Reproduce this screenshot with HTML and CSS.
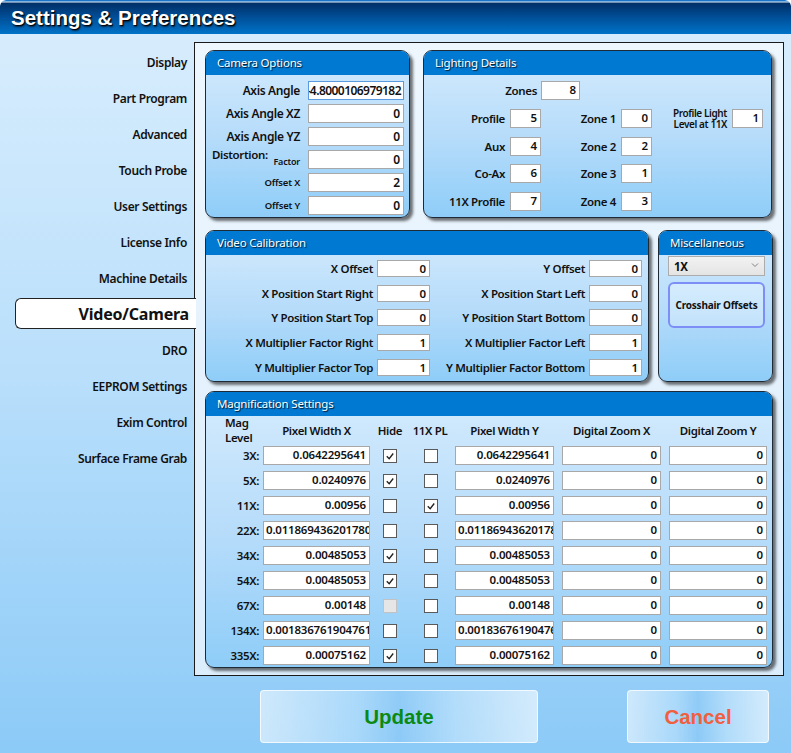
FILE: index.html
```html
<!DOCTYPE html>
<html>
<head>
<meta charset="utf-8">
<title>Settings &amp; Preferences</title>
<link rel="stylesheet" href="styles.css">
</head>
<body>
<div class="window">
  <div class="titlebar"><span class="title">Settings &amp; Preferences</span></div>
  <div class="main">
    <nav class="sidebar">
      <div class="nav-item">Display</div>
      <div class="nav-item">Part Program</div>
      <div class="nav-item">Advanced</div>
      <div class="nav-item">Touch Probe</div>
      <div class="nav-item">User Settings</div>
      <div class="nav-item">License Info</div>
      <div class="nav-item">Machine Details</div>
      <div class="nav-item active"><span class="tab">Video/Camera</span></div>
      <div class="nav-item">DRO</div>
      <div class="nav-item">EEPROM Settings</div>
      <div class="nav-item">Exim Control</div>
      <div class="nav-item">Surface Frame Grab</div>
    </nav>
    <div class="panel">
      <div class="row row1">
        <section class="group camera">
          <div class="ghead">Camera Options</div>
          <div class="camera-body">
            <label class="lbl">Axis Angle</label><div class="field focus overflow-left"><span>-4.8000106979182</span></div>
            <label class="lbl">Axis Angle XZ</label><div class="field">0</div>
            <label class="lbl">Axis Angle YZ</label><div class="field">0</div>
            <div class="lbl split"><span class="dist">Distortion:</span><span class="small">Factor</span></div><div class="field">0</div>
            <label class="lbl small">Offset X</label><div class="field">2</div>
            <label class="lbl small">Offset Y</label><div class="field">0</div>
          </div>
        </section>
        <section class="group lighting">
          <div class="ghead">Lighting Details</div>
          <div class="zones-row"><label class="lbl zones-lbl">Zones</label><div class="field zones-field">8</div></div>
          <div class="light-grid">
            <label class="lbl">Profile</label><div class="field">5</div>
            <label class="lbl">Zone 1</label><div class="field">0</div>
            <label class="lbl two-line">Profile Light<br>Level at 11X</label><div class="field">1</div>
            <label class="lbl">Aux</label><div class="field">4</div>
            <label class="lbl">Zone 2</label><div class="field">2</div>
            <span></span><span></span>
            <label class="lbl">Co-Ax</label><div class="field">6</div>
            <label class="lbl">Zone 3</label><div class="field">1</div>
            <span></span><span></span>
            <label class="lbl">11X Profile</label><div class="field">7</div>
            <label class="lbl">Zone 4</label><div class="field">3</div>
            <span></span><span></span>
          </div>
        </section>
      </div>
      <div class="row row2">
        <section class="group video">
          <div class="ghead">Video Calibration</div>
          <div class="video-grid">
            <label class="lbl">X Offset</label><div class="field">0</div>
            <label class="lbl">Y Offset</label><div class="field">0</div>
            <label class="lbl">X Position Start Right</label><div class="field">0</div>
            <label class="lbl">X Position Start Left</label><div class="field">0</div>
            <label class="lbl">Y Position Start Top</label><div class="field">0</div>
            <label class="lbl">Y Position Start Bottom</label><div class="field">0</div>
            <label class="lbl">X Multiplier Factor Right</label><div class="field">1</div>
            <label class="lbl">X Multiplier Factor Left</label><div class="field">1</div>
            <label class="lbl">Y Multiplier Factor Top</label><div class="field">1</div>
            <label class="lbl">Y Multiplier Factor Bottom</label><div class="field">1</div>
          </div>
        </section>
        <section class="group misc">
          <div class="ghead">Miscellaneous</div>
          <div class="select"><span>1X</span><svg class="chev" width="8" height="6" viewBox="0 0 8 6"><path d="M1 1.5 L4 4.5 L7 1.5" fill="none" stroke="#808080" stroke-width="1"/></svg></div>
          <div class="cross-btn">Crosshair Offsets</div>
        </section>
      </div>
      <div class="row row3">
        <section class="group mag">
          <div class="ghead">Magnification Settings</div>
          <div class="mag-grid">
            <div class="mh mag-level">Mag<br>Level</div>
            <div class="mh">Pixel Width X</div>
            <div class="mh">Hide</div>
            <div class="mh pl">11X PL</div>
            <div class="mh">Pixel Width Y</div>
            <div class="mh dz">Digital Zoom X</div>
            <div class="mh dz">Digital Zoom Y</div>

            <label class="rl">3X:</label><div class="field">0.0642295641</div>
            <div class="cbc"><span class="cb on"><svg viewBox="0 0 13 13"><path d="M3 6.8 L5.6 9.4 L10 3.8"/></svg></span></div>
            <div class="cbc pl"><span class="cb"></span></div>
            <div class="field">0.0642295641</div><div class="field dzx">0</div><div class="field dzy">0</div>

            <label class="rl">5X:</label><div class="field">0.0240976</div>
            <div class="cbc"><span class="cb on"><svg viewBox="0 0 13 13"><path d="M3 6.8 L5.6 9.4 L10 3.8"/></svg></span></div>
            <div class="cbc pl"><span class="cb"></span></div>
            <div class="field">0.0240976</div><div class="field dzx">0</div><div class="field dzy">0</div>

            <label class="rl">11X:</label><div class="field">0.00956</div>
            <div class="cbc"><span class="cb"></span></div>
            <div class="cbc pl"><span class="cb on"><svg viewBox="0 0 13 13"><path d="M3 6.8 L5.6 9.4 L10 3.8"/></svg></span></div>
            <div class="field">0.00956</div><div class="field dzx">0</div><div class="field dzy">0</div>

            <label class="rl">22X:</label><div class="field clip-right">0.0118694362017804</div>
            <div class="cbc"><span class="cb"></span></div>
            <div class="cbc pl"><span class="cb"></span></div>
            <div class="field clip-right">0.0118694362017804</div><div class="field dzx">0</div><div class="field dzy">0</div>

            <label class="rl">34X:</label><div class="field">0.00485053</div>
            <div class="cbc"><span class="cb on"><svg viewBox="0 0 13 13"><path d="M3 6.8 L5.6 9.4 L10 3.8"/></svg></span></div>
            <div class="cbc pl"><span class="cb"></span></div>
            <div class="field">0.00485053</div><div class="field dzx">0</div><div class="field dzy">0</div>

            <label class="rl">54X:</label><div class="field">0.00485053</div>
            <div class="cbc"><span class="cb on"><svg viewBox="0 0 13 13"><path d="M3 6.8 L5.6 9.4 L10 3.8"/></svg></span></div>
            <div class="cbc pl"><span class="cb"></span></div>
            <div class="field">0.00485053</div><div class="field dzx">0</div><div class="field dzy">0</div>

            <label class="rl">67X:</label><div class="field">0.00148</div>
            <div class="cbc"><span class="cb disabled"></span></div>
            <div class="cbc pl"><span class="cb"></span></div>
            <div class="field">0.00148</div><div class="field dzx">0</div><div class="field dzy">0</div>

            <label class="rl">134X:</label><div class="field clip-right">0.0018367619047619</div>
            <div class="cbc"><span class="cb"></span></div>
            <div class="cbc pl"><span class="cb"></span></div>
            <div class="field clip-right">0.00183676190476</div><div class="field dzx">0</div><div class="field dzy">0</div>

            <label class="rl">335X:</label><div class="field">0.00075162</div>
            <div class="cbc"><span class="cb on"><svg viewBox="0 0 13 13"><path d="M3 6.8 L5.6 9.4 L10 3.8"/></svg></span></div>
            <div class="cbc pl"><span class="cb"></span></div>
            <div class="field">0.00075162</div><div class="field dzx">0</div><div class="field dzy">0</div>
          </div>
        </section>
      </div>
    </div>
  </div>
  <div class="actions">
    <button class="btn update">Update</button>
    <button class="btn cancel">Cancel</button>
  </div>
</div>
</body>
</html>
```

FILE: styles.css
```css
* { box-sizing: border-box; }
html, body { margin: 0; padding: 0; }
body {
  width: 791px;
  height: 753px;
  overflow: hidden;
  font-family: "Noto Sans", "Open Sans", sans-serif;
  color: #111;
  letter-spacing: -0.35px;
}
.window {
  width: 791px;
  height: 753px;
  background: linear-gradient(to bottom, #daeefd 0%, #b9dffb 50%, #8ccaf7 100%);
  border-radius: 6px 6px 0 0;
  overflow: hidden;
}
.titlebar {
  height: 34px;
  background: linear-gradient(to bottom, #1b74c8 0px, #1b74c8 1px, #e8f3fc 2px, #002f66 3px, #004c94 16px, #0073c8 34px);
  border-radius: 6px 6px 0 0;
  display: flex;
  align-items: center;
  padding-left: 11px;
  padding-top: 2px;
}
.title {
  font-family: "Liberation Sans", Arial, sans-serif;
  font-weight: bold;
  font-size: 20.5px;
  letter-spacing: 0;
  color: #fff;
  text-shadow: 1px 1px 1px #000, 1px 2px 2px rgba(0,0,0,.6);
}
.main {
  display: flex;
  height: 642px;
}
.sidebar {
  width: 194px;
  flex: none;
  padding-top: 10px;
  display: flex;
  flex-direction: column;
}
.nav-item {
  height: 36px;
  display: flex;
  align-items: center;
  justify-content: flex-end;
  padding-right: 7px;
  font-size: 12px;
  font-weight: 600;
  color: #111;
}
.nav-item.active {
  padding-right: 0;
  position: relative;
  z-index: 2;
}
.tab {
  margin: 2px -2px 3px 15px;
  flex: 1;
  height: 31px;
  background: #fff;
  border: 1px solid #222;
  border-right: none;
  border-radius: 6px 0 0 6px;
  display: flex;
  align-items: center;
  justify-content: flex-end;
  padding-right: 7px;
  font-size: 16px;
  font-weight: 700;
  letter-spacing: -0.2px;
}
.panel {
  margin-top: 8px;
  width: 590px;
  height: 634px;
  border: 1px solid #1a1a1a;
  background: linear-gradient(to bottom, #eef7fe, #dcedfc);
  padding: 7px 0 0 10px;
}
.row { display: flex; }
.row1 { gap: 13px; height: 168px; }
.row2 { gap: 9px; height: 152px; margin-top: 12px; }
.row3 { margin-top: 9px; height: 277px; }

.group {
  border: 1px solid #1e2a36;
  border-radius: 9px;
  overflow: hidden;
  background: linear-gradient(to bottom, #d4ebfd 0%, #b4dbfa 55%, #8ecdf8 100%);
  box-shadow: 3px 3px 3px rgba(0,0,0,.55);
}
.ghead {
  height: 24px;
  line-height: 24px;
  background: #0079d3;
  color: #fff;
  font-size: 11.5px;
  letter-spacing: -0.2px;
  padding-left: 11px;
  text-shadow: 1px 1px 1px rgba(0,0,0,.8);
}
.camera { width: 205px; height: 168px; }
.lighting { width: 349px; height: 168px; }
.video { width: 444px; height: 152px; }
.misc { width: 115px; height: 152px; }
.mag { width: 568px; height: 277px; }

.lbl {
  font-size: 11.5px;
  font-weight: 600;
  text-align: right;
  display: flex;
  align-items: center;
  justify-content: flex-end;
  white-space: nowrap;
}
.lbl.small, .lbl .small { font-size: 9px; letter-spacing: -0.2px; }
.field {
  background: #fff;
  border: 1px solid #a8a8a8;
  font-size: 11.5px;
  font-weight: 600;
  letter-spacing: -0.2px;
  text-align: right;
  padding: 0 3px;
  line-height: 16px;
  white-space: nowrap;
  overflow: hidden;
  color: #111;
}
.field.focus { border-color: #5a9be0; }
.field.overflow-left {
  display: flex;
  justify-content: flex-end;
  padding-right: 2px;
  letter-spacing: -0.55px;
}
.field.overflow-left span { flex: none; }
.field.clip-right { text-align: left; padding-left: 2px; }

.camera-body {
  display: grid;
  grid-template-columns: 1fr 96px;
  grid-auto-rows: 19px;
  column-gap: 8px;
  row-gap: 4px;
  padding: 6px 5px 0 6px;
}
.camera .field { line-height: 17px; font-size: 12px; }
.camera .lbl { font-size: 12px; }
.camera .lbl.small { font-size: 9.5px; }
.lbl.split { justify-content: space-between; }
.lbl.split .dist { align-self: flex-start; font-size: 11.5px; margin-top: -3px; }
.lbl.split .small { margin-top: 3px; }

.zones-row {
  display: flex;
  margin-top: 6px;
  height: 19px;
}
.zones-lbl { width: 113px; margin-right: 4px; }
.zones-field { width: 39px; }
.light-grid {
  display: grid;
  grid-template-columns: 81px 31px 70px 31px 70px 31px;
  grid-auto-rows: 19px;
  column-gap: 5px;
  row-gap: 8.5px;
  margin-top: 9px;
}
.light-grid .field, .zones-field { line-height: 15px; }
.lbl.two-line { font-size: 10px; line-height: 11px; text-align: right; letter-spacing: -0.4px; }

.video-grid {
  display: grid;
  grid-template-columns: 167px 53px 151px 53px;
  grid-auto-rows: 17px;
  column-gap: 4px;
  row-gap: 7.7px;
  padding-top: 5px;
}
.video-grid .field { line-height: 15px; }

.select {
  margin: 1px 0 0 9px;
  width: 97px;
  height: 20px;
  border: 1px solid #acacac;
  background: linear-gradient(to bottom, #f2f2f2, #e4e4e4);
  display: flex;
  align-items: center;
  justify-content: space-between;
  padding: 0 5px 0 5px;
  font-size: 11.5px;
  font-weight: 700;
}
.chev { margin-top: -3px; }
.cross-btn {
  margin: 6px 0 0 9px;
  width: 97px;
  height: 46px;
  border: 2px solid #7d8ff6;
  border-radius: 6px;
  background: linear-gradient(to bottom, #d5ecfd, #c2e2fb);
  display: flex;
  align-items: center;
  justify-content: center;
  font-size: 10px;
  font-weight: 700;
  letter-spacing: -0.2px;
}

.mag-grid {
  display: grid;
  grid-template-columns: 57px 107px 40px 45px 99px 107px 106px;
  grid-template-rows: 24px;
  grid-auto-rows: 19px;
  row-gap: 6px;
}
.mh {
  font-size: 11.5px;
  font-weight: 600;
  text-align: center;
  align-self: center;
  white-space: nowrap;
  margin-top: 4px;
}
.mh.mag-level { line-height: 15px; text-align: left; padding-left: 19px; margin-top: 3px; }
.mh.pl { padding-right: 5px; }
.mh.dz { padding-left: 8px; }
.mag-grid .rl {
  font-size: 11.5px;
  font-weight: 600;
  text-align: right;
  padding-right: 4px;
  display: flex;
  align-items: center;
  justify-content: flex-end;
}
.mag-grid .field { line-height: 16px; }
.mag-grid .dzx { width: 99px; justify-self: end; }
.mag-grid .dzy { width: 98px; justify-self: end; }
.cbc {
  display: flex;
  align-items: center;
  justify-content: center;
}
.cbc.pl { justify-content: flex-start; padding-left: 14px; }
.cb {
  width: 14px;
  height: 14px;
  background: #fff;
  border: 1px solid #5a5a5a;
  display: block;
}
.cb svg { width: 12px; height: 12px; display: block; }
.cb svg path { fill: none; stroke: #222; stroke-width: 1.5; }
.cb.disabled { background: #e6e6e6; border-color: #c2c2c2; }

.actions {
  display: flex;
  gap: 89px;
  padding: 14px 0 0 260px;
}
.btn {
  height: 53px;
  border: 1px solid rgba(255,255,255,.75);
  border-radius: 4px;
  background: linear-gradient(to right, rgba(255,255,255,.55) 0%, rgba(200,232,253,.45) 35%, rgba(140,200,245,.35) 50%, rgba(210,236,253,.5) 70%, rgba(255,255,255,.6) 100%);
  font-family: "Liberation Sans", Arial, sans-serif;
  font-weight: bold;
  font-size: 20.5px;
  letter-spacing: 0;
  cursor: pointer;
  padding: 0;
}
.update { width: 278px; color: #0b8a12; }
.cancel { width: 142px; color: #f0603f; }
```
